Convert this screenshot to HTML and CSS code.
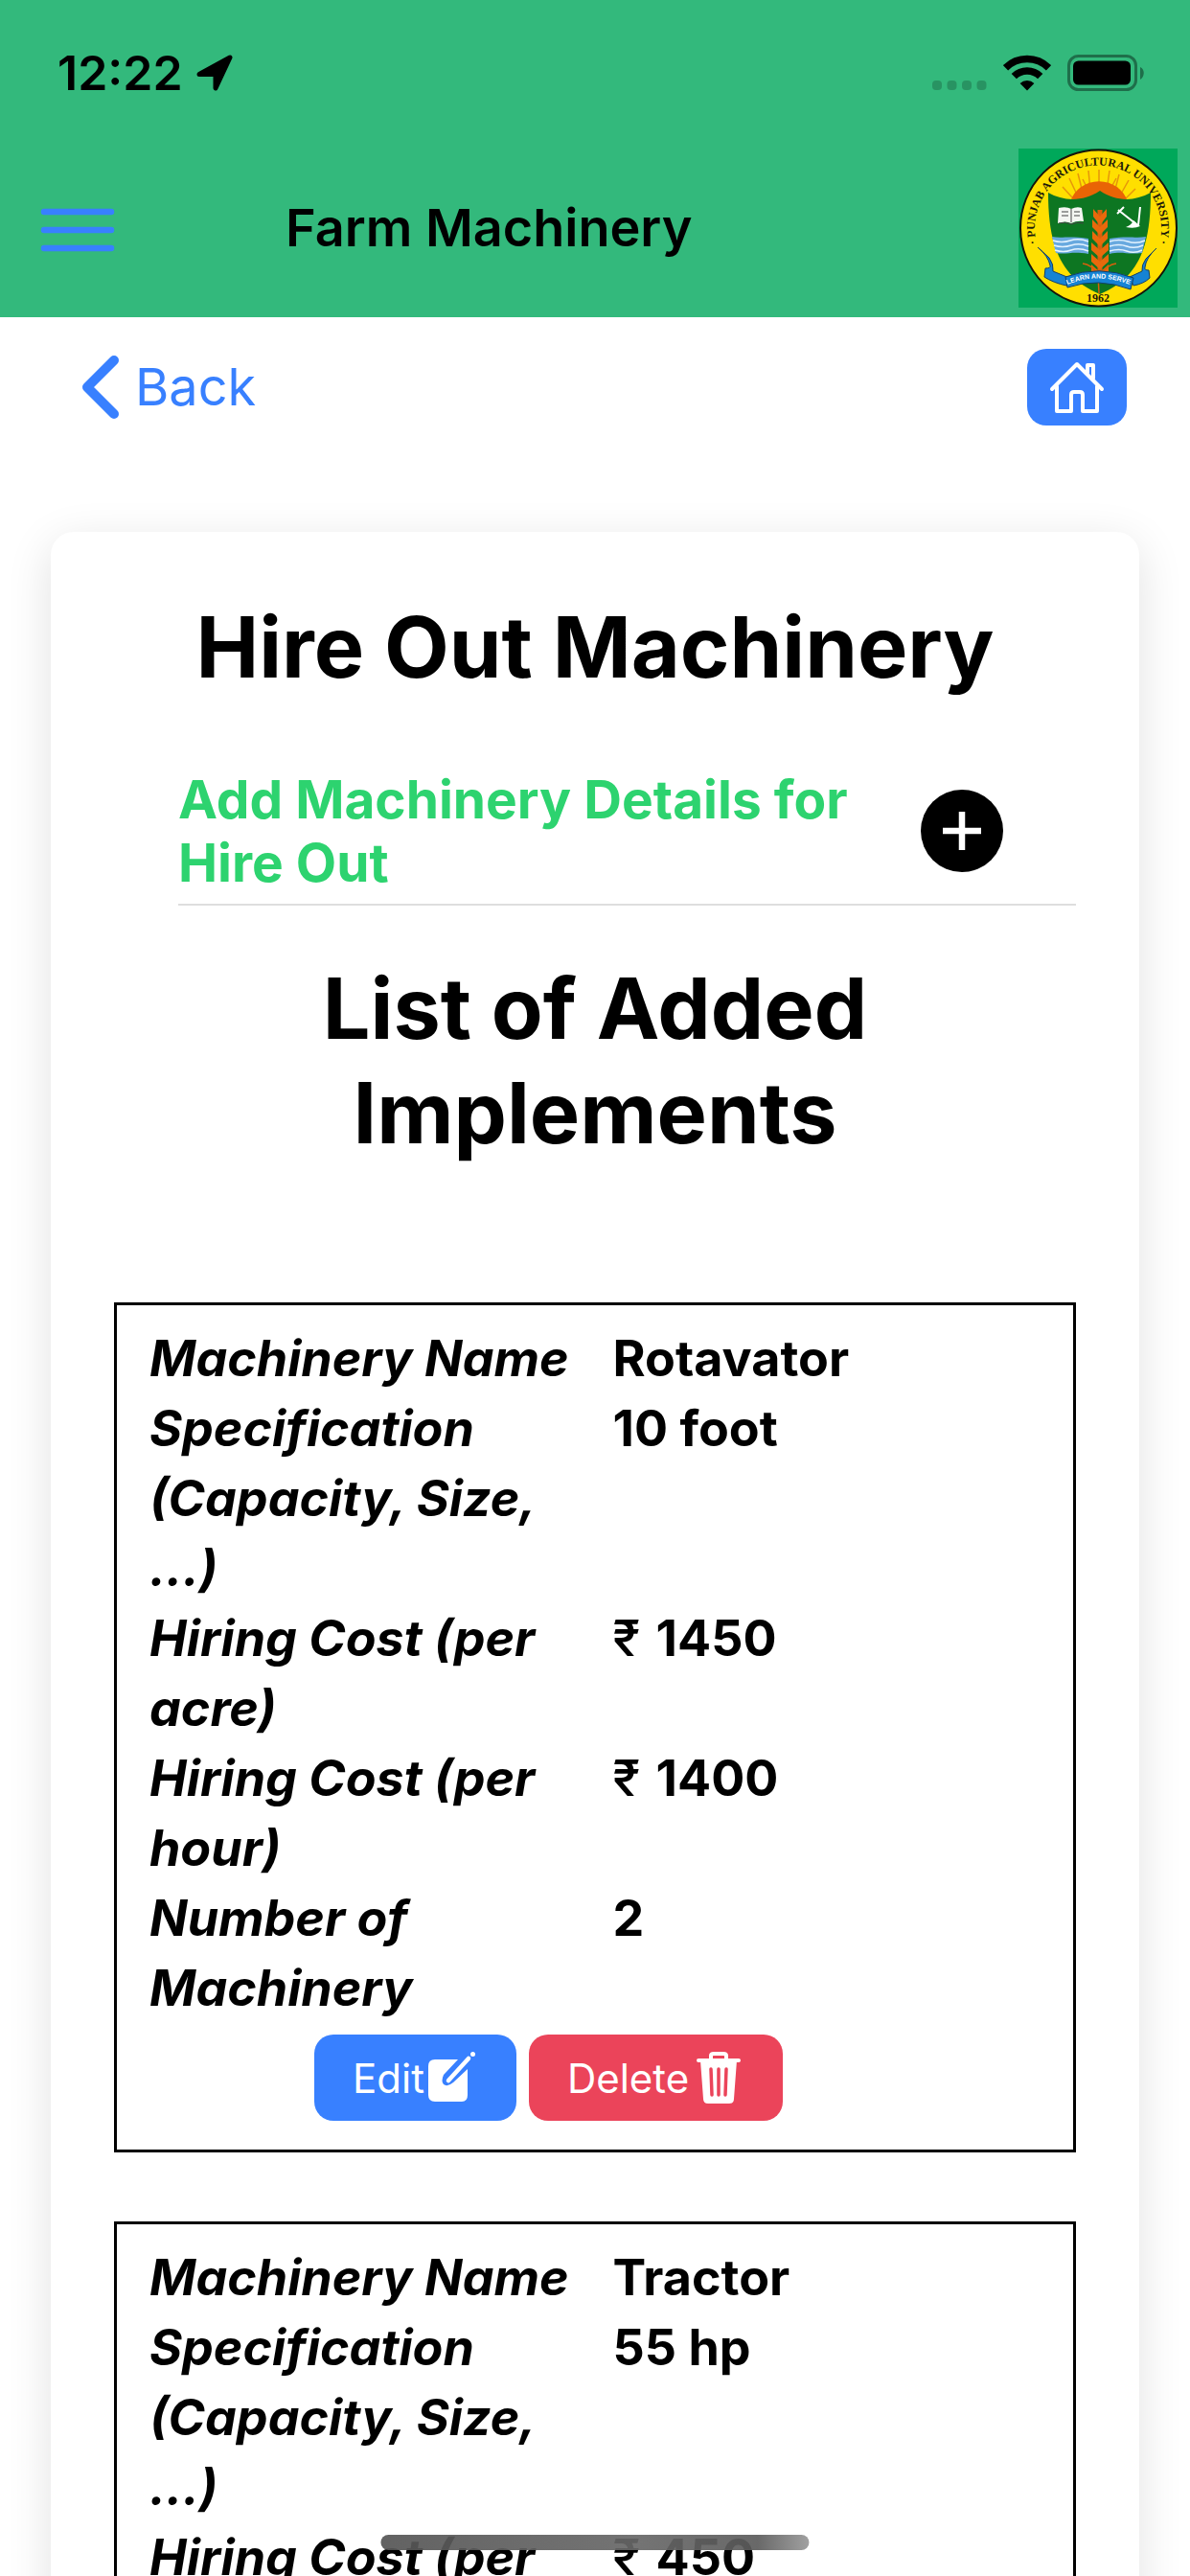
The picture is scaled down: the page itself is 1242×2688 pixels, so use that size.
FILE: index.html
```html
<!DOCTYPE html>
<html lang="en">
<head>
<meta charset="utf-8">
<meta name="viewport" content="width=device-width, initial-scale=1">
<title>Farm Machinery</title>
<link rel="stylesheet" href="styles.css">
</head>
<body>
<header class="header">
  <div class="status">
    <span class="status-time">12:22</span>
    <svg class="status-location" viewBox="0 0 38 38" aria-hidden="true"><path d="M35 3 20 35V20.500H3Z" stroke="#000" stroke-width="5" stroke-linejoin="round"/></svg>
    <span class="status-spacer"></span>
    <svg class="status-signal" viewBox="0 0 57 38" fill="#000" opacity=".2" aria-hidden="true"><rect x="0" y="27" width="10" height="10" rx="4"/><rect x="15.500" y="27" width="10" height="10" rx="4"/><rect x="31" y="27" width="10" height="10" rx="4"/><rect x="46.500" y="27" width="10" height="10" rx="4"/></svg>
    <svg class="status-wifi" viewBox="0 0 50 38" aria-hidden="true"><g fill="none" stroke="#000" stroke-width="7.500"><path d="M2.500 13.800a32 32 0 0 1 45 0"/><path d="M11.300 22.700a19.500 19.500 0 0 1 27.400 0"/></g><path d="M25 37.500 17.600 30a10.500 10.500 0 0 1 14.800 0Z"/></svg>
    <svg class="status-battery" viewBox="0 0 81 38" aria-hidden="true"><rect x="1.500" y="1.500" width="70" height="35" rx="10" fill="none" stroke="#000" stroke-opacity=".4" stroke-width="3"/><rect x="6" y="6.500" width="60" height="25" rx="5.500"/><path d="M76 13c5 2 5 10 0 13Z" opacity=".4"/></svg>
  </div>
  <div class="toolbar">
    <button class="menu" type="button" aria-label="Menu">
      <svg viewBox="0 0 78 46" aria-hidden="true"><path d="M4 4H74M4 23H74M4 42H74" stroke="#3880ff" stroke-width="6.500" stroke-linecap="round"/></svg>
    </button>
    <h1 class="title">Farm Machinery</h1>
    <svg class="logo" viewBox="0 0 166 166" role="img" aria-label="Punjab Agricultural University">
      <rect width="166" height="166" fill="#00a85a"/>
      <circle cx="83.500" cy="83" r="81.500" fill="#ffdf00" stroke="#14140a" stroke-width="2"/>
      <defs>
        <path id="ring" d="M23 111A66 66 0 1 1 143 111"/>
        <path id="motto" d="M51 142Q82 129 116 142"/>
      </defs>
      <g stroke="#e6960a" stroke-width="1.500"><path d="M84 44V22M75 44 73 23M92 44 95 23M67 46 62 26M100 46 105 27M61 48 53 31M106 49 115 33M56 51 46 40M111 53 122 42M73 44 67 32M95 44 102 31"/></g>
      <path d="M54 56a31 29 0 0 1 60 0L84 64Z" fill="#e96405"/>
      <path d="M31 46c16 9 36 10 54-2 18 12 36 11 53 2 0 52-10 88-53 106C42 134 31 98 31 46Z" fill="#0d7622"/>
      <path d="M35 92c9 2 19-1 38 2v16c-18-3-22 1-34-1ZM95 94c19-3 28 0 38-2l-4 17c-16 2-20-2-34 1Z" fill="#68a9df"/>
      <path d="M36 96q9 3 18 0t19 1M37 101q9 3 18 0t18 1M38 106q9 3 17 0t18 1M95 97q10-3 19 0t18-1M95 102q10-3 18 0t17-1M95 107q10-3 18 0t16-1" fill="none" stroke="#e4f3ff" stroke-width="1.500"/>
      <path d="M42 62q8-2 13 1 6-3 11-1l2 14q-7-1-13 2-6-3-14 0Z" fill="#f4f6f2"/>
      <path d="M55 63v14M45 66h7M45 70h7M58 66h6M58 70h6M42 78q7-2 13 1 6-3 13-1" fill="none" stroke="#444" stroke-width="1"/>
      <path d="M104 64 123 79M103 68 110 61M127 61 125 80" fill="none" stroke="#fff" stroke-width="2"/>
      <path d="M112 82Q118 80 120 75L127 81Q121 84 112 82Z" fill="#fff"/>
      <path d="M85 64v68" stroke="#d95f0c" stroke-width="5"/>
      <path d="M78 63l7 8 7-8v8l-7 9-7-9ZM77 74l8 8 8-8v8l-8 8-8-8ZM77 86l8 8 8-8v8l-8 8-8-8ZM76 98l9 8 9-8v8l-9 8-9-8ZM76 110l9 8 9-8v8l-9 8-9-8ZM76 121l9 8 9-8v8l-9 7-9-7Z" fill="#e8690c"/>
      <path d="M84 151l-1-20q-7-10-16-11M86 131q7-10 16-11" fill="none" stroke="#d95f0c" stroke-width="1.500"/>
      <path d="M20 103l12 11q5 7 4 14l17 7-3 8q-14-3-23-9l1-9q6 0 5-3-2-10-13-19ZM144 104l-11 11q-5 7-4 13l-13 6 4 9q11-2 17-8l-1-8q-5 0-4-3 1-10 12-20Z" fill="#1683d4" stroke="#123f68" stroke-width="1"/>
      <path d="M49 134q35-13 71 1l-3 12q-34-13-66-2Z" fill="#1683d4" stroke="#123f68" stroke-width="1"/>
      <text class="logo-motto"><textPath href="#motto" startOffset="50%">LEARN AND SERVE</textPath></text>
      <text class="logo-ring"><textPath href="#ring" startOffset="50%">· PUNJAB AGRICULTURAL UNIVERSITY ·</textPath></text>
      <text class="logo-year" x="83" y="160">1962</text>
    </svg>
  </div>
</header>

<main class="content">
  <nav class="nav">
    <a class="back" href="#back">
      <svg viewBox="0 0 40 68" aria-hidden="true"><path d="M34 6 6 34 34 62" fill="none" stroke="#3880ff" stroke-width="10" stroke-linecap="round" stroke-linejoin="round"/></svg>
      Back
    </a>
    <a class="home" href="#home" aria-label="Home">
      <svg viewBox="0 0 58 56" fill="none" stroke="#fff" stroke-width="4" stroke-linecap="round" stroke-linejoin="round" aria-hidden="true"><path d="M3 30 29 4 55 30M8 27v26h15V36q0-3 3-3h6q3 0 3 3v17h15V27M40 13V5h6v14"/></svg>
    </a>
  </nav>

  <section class="card">
    <h2 class="heading">Hire Out Machinery</h2>
    <div class="add-item">
      <span class="add-label">Add Machinery Details for Hire Out</span>
      <button class="add-button" type="button" aria-label="Add machinery">
        <svg viewBox="0 0 86 86" aria-hidden="true"><circle cx="43" cy="43" r="43"/><path d="M43 23V63M23 43H63" stroke="#fff" stroke-width="6.500"/></svg>
      </button>
    </div>
    <h2 class="heading">List of Added Implements</h2>

    <article class="machine">
      <dl class="details">
        <dt>Machinery Name</dt><dd>Rotavator</dd>
        <dt>Specification (Capacity, Size, ...)</dt><dd>10 foot</dd>
        <dt>Hiring Cost (per acre)</dt><dd><span class="rupee">₹</span> 1450</dd>
        <dt>Hiring Cost (per hour)</dt><dd><span class="rupee">₹</span> 1400</dd>
        <dt>Number of Machinery</dt><dd>2</dd>
      </dl>
      <div class="actions">
        <button class="action edit" type="button">Edit<svg viewBox="0 0 50 54" aria-hidden="true"><path d="M7 8H31L16 24Q13 31 16 34 20 37 26 32L41 18V45Q41 52 35 52H7Q0 52 0 45V15Q0 8 7 8Z" fill="#fff"/><path d="M42 7 21 30" stroke="#fff" stroke-width="4.500" stroke-linecap="round"/><circle cx="46.500" cy="2.500" r="2.500" fill="#fff"/></svg></button>
        <button class="action delete" type="button">Delete<svg viewBox="0 0 50 54" aria-hidden="true"><path d="M4 9H46M17 8V4Q17 2 20 2H30Q33 2 33 4V8" fill="none" stroke="#fff" stroke-width="4" stroke-linecap="round"/><path d="M6 9H44L41 49Q41 54 36 54H14Q9 54 9 49Z" fill="#fff"/><path d="M17 18 18 45M25 18V45M33 18 32 45" stroke="#eb445a" stroke-width="3.500" stroke-linecap="round"/></svg></button>
      </div>
    </article>

    <article class="machine">
      <dl class="details">
        <dt>Machinery Name</dt><dd>Tractor</dd>
        <dt>Specification (Capacity, Size, ...)</dt><dd>55 hp</dd>
        <dt>Hiring Cost (per acre)</dt><dd><span class="rupee">₹</span> 450</dd>
      </dl>
    </article>
  </section>
</main>
<div class="home-indicator"></div>
</body>
</html>
```
FILE: styles.css
```css
* {
  box-sizing: border-box;
}

body {
  display: flex;
  flex-direction: column;
  height: 100vh;
  margin: 0;
  overflow: hidden;
  background: #fff;
  color: #000;
  font-family: Inter, "Liberation Sans", sans-serif;
}

svg {
  display: block;
  flex: none;
}

button {
  padding: 0;
  border: 0;
  background: none;
  font: inherit;
}

h1,
h2,
dl,
dd {
  margin: 0;
}

/* Header */

.header {
  flex: none;
  background: #33b97c;
}

.status {
  display: flex;
  align-items: center;
  padding: 46px 47px 0 60px;
}

.status-time {
  font-size: 50px;
  font-weight: 600;
  line-height: 60px;
}

.status-location {
  width: 38px;
  height: 38px;
  margin-left: 14px;
}

.status-spacer {
  flex: 1;
}

.status-signal {
  width: 57px;
  height: 38px;
}

.status-wifi {
  width: 50px;
  height: 38px;
  margin: 0 17px;
}

.status-battery {
  width: 81px;
  height: 38px;
}

.toolbar {
  display: flex;
  align-items: center;
  padding: 49px 13px 10px 42px;
}

.menu {
  padding-top: 4px;
}

.menu svg {
  width: 78px;
  height: 46px;
}

.title {
  flex: 1;
  padding-left: 178px;
  font-size: 54px;
  font-weight: 600;
  line-height: 64px;
}

.logo {
  width: 166px;
  height: 166px;
}

.logo-ring,
.logo-year,
.logo-motto {
  fill: #1c1a08;
  font-family: "Liberation Serif", serif;
  font-weight: 700;
  text-anchor: middle;
}

.logo-ring {
  font-size: 12px;
}

.logo-year {
  font-size: 12px;
}

.logo-motto {
  fill: #fff;
  font-family: "Liberation Sans", sans-serif;
  font-size: 7px;
}

/* Content */

.content {
  flex: 1;
  min-height: 0;
  padding: 33px 53px 0;
  overflow: hidden auto;
  scrollbar-width: none;
}

.nav {
  display: flex;
  align-items: center;
  justify-content: space-between;
  padding: 0 13px 0 32px;
}

.back {
  display: flex;
  align-items: center;
  gap: 16px;
  color: #3880ff;
  font-size: 54px;
  line-height: 80px;
  text-decoration: none;
}

.back svg {
  width: 40px;
  height: 68px;
}

.home {
  display: flex;
  align-items: center;
  justify-content: center;
  width: 104px;
  height: 80px;
  border-radius: 20px;
  background: #3880ff;
}

.home svg {
  width: 58px;
  height: 56px;
}

.card {
  margin-top: 111px;
  padding: 66px;
  border-radius: 24px;
  background: #fff;
  box-shadow: 0 12px 48px rgba(0, 0, 0, 0.12);
}

.heading {
  font-size: 88px;
  font-weight: 700;
  line-height: 109px;
  text-align: center;
}

.add-item {
  display: flex;
  align-items: center;
  justify-content: space-between;
  margin: 71px 0 53px 67px;
  padding: 0 76px 10px 0;
  border-bottom: 2px solid #dedede;
}

.add-label {
  flex: 1;
  max-width: 720px;
  color: #2dd36f;
  font-size: 55px;
  font-weight: 700;
  line-height: 66px;
}

.add-button svg {
  width: 86px;
  height: 86px;
}

.machine {
  margin-top: 72px;
  padding: 19px 34px 30px;
  border: 3px solid #000;
}

.heading + .machine {
  margin-top: 143px;
}

.details {
  display: grid;
  grid-template-columns: 52% 48%;
  font-size: 52px;
  font-weight: 700;
  line-height: 73px;
}

.details dt {
  padding-right: 33px;
  font-style: italic;
}

.rupee {
  margin-right: 4px;
  font-weight: 500;
}

.actions {
  display: flex;
  gap: 13px;
  margin-top: 12px;
  padding-left: 172px;
}

.action {
  display: flex;
  align-items: center;
  height: 90px;
  padding: 0 42px 0 40px;
  border-radius: 20px;
  color: #fff;
  font-size: 42px;
}

.action svg {
  width: 50px;
  height: 54px;
}

.edit {
  gap: 4px;
  background: #3880ff;
}

.delete {
  gap: 6px;
  background: #eb445a;
}

.home-indicator {
  position: fixed;
  bottom: 27px;
  left: 50%;
  width: 36%;
  height: 16px;
  border-radius: 8px;
  background: linear-gradient(90deg, #555 0%, #686868 60%, #5c5c5c 88%, #999 100%);
  opacity: 0.92;
  transform: translateX(-50%);
}
```
